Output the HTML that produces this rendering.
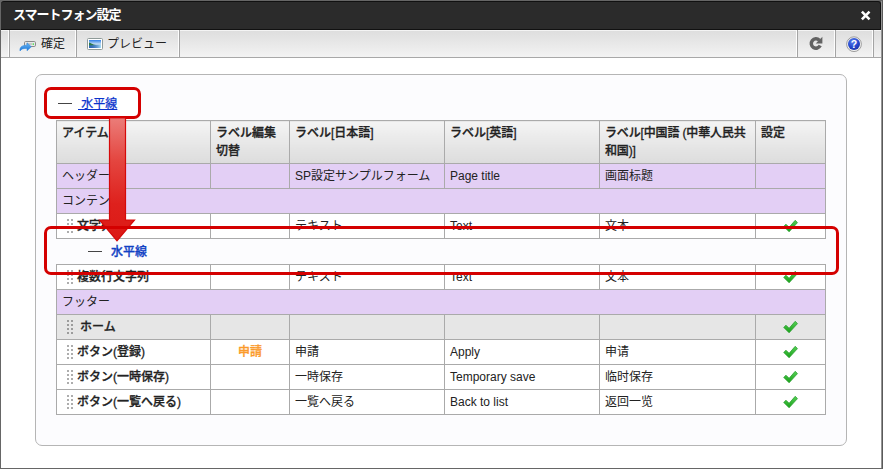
<!DOCTYPE html>
<html lang="ja">
<head>
<meta charset="utf-8">
<title>スマートフォン設定</title>
<style>
*{box-sizing:border-box;margin:0;padding:0}
html,body{width:883px;height:469px;overflow:hidden;background:#fff}
body{position:relative;font-family:"Liberation Sans","Noto Sans CJK JP",sans-serif;font-size:12px;color:#222}
#frame{position:absolute;left:0;top:0;width:883px;height:469px;border:1px solid #666;border-right:1px solid #5a5a5a;background:linear-gradient(#666 0,#666 6px,#fff 6px);box-shadow:inset -1px 0 0 #959595}
#title{position:absolute;left:1px;top:1px;width:880px;height:29px;background:#2b2b2b;border-top:1px solid #111;border-bottom:1px solid #111;border-right:1px solid #111;border-radius:3px 3px 0 0;color:#fff;font-weight:bold;font-size:13px;letter-spacing:-1px;line-height:26px;padding-left:12px}
#close{position:absolute;left:860px;top:10px;width:11px;height:11px}
#tb{position:absolute;left:1px;top:30px;width:880px;height:28px;background:linear-gradient(#f4f4f4 0,#f4f4f4 1px,#dedede 1px,#f3f3f3 27px);border-bottom:1px solid #a8a8a8}
.sep{position:absolute;top:0;width:2px;height:27px;border-right:1px solid #a4a4a4;background:#fdfdfd}
.tbtxt{position:absolute;top:1px;line-height:27px;font-size:12px;color:#222}
.ico{position:absolute}
#fs{position:absolute;left:35px;top:74px;width:812px;height:372px;border:1px solid #b5b5b5;border-radius:7px;background:#fcfcfe}
table{position:absolute;left:56px;top:120px;border-collapse:collapse;table-layout:fixed;width:769px;font-size:12px}
td,th{border:1px solid #aaa;height:25px;padding:0 5px;line-height:16px;text-align:left;vertical-align:middle;white-space:nowrap;overflow:hidden;background:#fff}
th{height:43px;vertical-align:top;font-weight:500;-webkit-text-stroke:0.3px #222;padding-top:4px;line-height:17.6px;background:linear-gradient(#f4f4f4,#dcdcdc);white-space:normal}
tr.p td{background:#e3cff5}
tr.g td{background:#e6e6e6}
td.b{font-weight:500;-webkit-text-stroke:0.3px #222;padding-left:20px;position:relative}
td.c{text-align:center;padding:0}
.org{color:#fb9a2a;font-weight:500;-webkit-text-stroke:0.3px #fb9a2a}
.grip{position:absolute;left:10px;top:5px;width:2px;height:2px;background:rgba(0,0,0,.32);box-shadow:4px 0 rgba(0,0,0,.32),0 4px rgba(0,0,0,.32),4px 4px rgba(0,0,0,.32),0 8px rgba(0,0,0,.32),4px 8px rgba(0,0,0,.32),0 12px rgba(0,0,0,.32),4px 12px rgba(0,0,0,.32)}
.ck{display:block;margin:0 auto;width:16px;height:14px}
#rb1{position:absolute;left:44px;top:87px;width:97px;height:32px;border:3px solid #d40000;border-radius:7px;background:#fff}
#rb2{position:absolute;left:44px;top:226px;width:795px;height:49px;border:3px solid #d40000;border-radius:7px}
a{color:#0b33cc;-webkit-text-stroke:0.25px #0b33cc}
.dash{position:absolute;width:14px;height:1px;background:#444}
#lnk1{position:absolute;left:78px;top:96px;font-size:12px;line-height:16px}
#lnk2{position:absolute;left:111px;top:243.5px;font-size:12px;line-height:16px;font-weight:500;-webkit-text-stroke:0.3px #1141c4;color:#1141c4}
#arrow{position:absolute;left:95px;top:116px;width:44px;height:128px}
</style>
</head>
<body>
<svg width="0" height="0" style="position:absolute">
<defs>
<linearGradient id="cg" x1="0" y1="0" x2="0" y2="1"><stop offset="0" stop-color="#55d055"/><stop offset="1" stop-color="#18a018"/></linearGradient>
<symbol id="ck" viewBox="0 0 16 14"><path d="M0.7 7.4 L3 5.2 L6.1 8.3 L12.2 1.3 L14.5 3.6 L6.1 12.8 Z" fill="url(#cg)" stroke="#1f9a25" stroke-width="0.7" stroke-linejoin="round"/></symbol>
</defs>
</svg>
<div id="frame"></div>
<div id="title">スマートフォン設定</div>
<svg id="close" viewBox="0 0 11 11"><path d="M1.9 1.7 L9.5 9.3 M9.5 1.7 L1.9 9.3" stroke="#fff" stroke-width="2.6" stroke-linecap="butt"/></svg>
<div id="tb">
  <div class="sep" style="left:7px"></div>
  <div class="sep" style="left:74px"></div>
  <div class="sep" style="left:177px"></div>
  <div class="sep" style="left:795px"></div>
  <div class="sep" style="left:833px"></div>
  <div class="sep" style="left:871px"></div>
  <svg class="ico" style="left:17px;top:8px" width="20" height="16" viewBox="0 0 20 16">
    <defs><linearGradient id="ba" x1="0" y1="0" x2="0" y2="1"><stop offset="0" stop-color="#6ab8f4"/><stop offset="1" stop-color="#1c74d6"/></linearGradient></defs>
    <rect x="6.5" y="3.5" width="11" height="5" rx="1.2" fill="#e8e8e8" stroke="#8a8a8a"/>
    <rect x="8" y="5.5" width="6" height="1" fill="#aaa"/>
    <rect x="14.6" y="5.4" width="1.4" height="1.4" fill="#3ddc3d"/>
    <path d="M2 13 C1.4 9.2 4 7 9 7.2 L9 4.8 L13.4 8.8 L9 12.8 L9 10.5 C5.6 10.2 3.6 10.8 2 13 Z" fill="url(#ba)" stroke="#2a86e0" stroke-width="0.5"/>
  </svg>
  <span class="tbtxt" style="left:40px">確定</span>
  <svg class="ico" style="left:86px;top:8px" width="16" height="12" viewBox="0 0 16 12">
    <defs>
      <linearGradient id="sky" x1="0" y1="0" x2="0" y2="1"><stop offset="0" stop-color="#2f7fe8"/><stop offset="0.55" stop-color="#cfe6f6"/><stop offset="0.62" stop-color="#3a76b8"/><stop offset="1" stop-color="#2c62b4"/></linearGradient>
      <linearGradient id="wat" x1="0" y1="0" x2="1" y2="0"><stop offset="0" stop-color="#2c62b4" stop-opacity="0"/><stop offset="1" stop-color="#a8e0f8"/></linearGradient>
    </defs>
    <rect x="0.5" y="0.5" width="15" height="11" rx="1" fill="#fff" stroke="#8e9a98"/>
    <rect x="2" y="2" width="12" height="8" fill="url(#sky)"/>
    <rect x="2" y="6.8" width="12" height="3.2" fill="url(#wat)"/>
    <path d="M2 4.6 C4 4.8 5 6.6 9 7 L2 7.6 Z" fill="#2f7a4a"/>
  </svg>
  <span class="tbtxt" style="left:106px">プレビュー</span>
  <svg class="ico" style="left:806px;top:6px" width="17" height="16" viewBox="0 0 17 16">
    <path d="M12.3 4.2 A4.7 4.7 0 1 0 13.2 9.6" fill="none" stroke="#636363" stroke-width="3.5"/>
    <path d="M8.8 7.4 L15.4 7.4 L15.4 0.8 Z" fill="#636363"/>
  </svg>
  <svg class="ico" style="left:845px;top:6px" width="16" height="16" viewBox="0 0 16 16">
    <defs><radialGradient id="hb" cx="0.4" cy="0.3" r="0.8"><stop offset="0" stop-color="#5a80ec"/><stop offset="0.6" stop-color="#2346cc"/><stop offset="1" stop-color="#1a2f9a"/></radialGradient></defs>
    <circle cx="8" cy="8.2" r="7.4" fill="#f0f0f0" stroke="#8c8c8c" stroke-width="0.8"/>
    <circle cx="8" cy="8" r="6" fill="url(#hb)"/>
    <text x="8" y="12" text-anchor="middle" font-family="Liberation Sans, sans-serif" font-weight="bold" font-size="10.5" fill="#fff">?</text>
  </svg>
</div>
<div id="fs"></div>
<table>
<colgroup><col style="width:154px"><col style="width:79px"><col style="width:155px"><col style="width:155px"><col style="width:156px"><col style="width:70px"></colgroup>
<tr><th>アイテム</th><th>ラベル編集<br>切替</th><th>ラベル[日本語]</th><th>ラベル[英語]</th><th style="letter-spacing:-0.15px">ラベル[中国語 (中華人民共和国)]</th><th>設定</th></tr>
<tr class="p"><td>ヘッダー</td><td></td><td>SP設定サンプルフォーム</td><td>Page title</td><td>画面标题</td><td></td></tr>
<tr class="p"><td colspan="6">コンテンツ</td></tr>
<tr><td class="b"><i class="grip"></i>文字列</td><td></td><td>テキスト</td><td>Text</td><td>文本</td><td class="c"><svg class="ck"><use href="#ck"/></svg></td></tr>
<tr><td colspan="6" style="height:26px;border-left-color:transparent;border-right-color:transparent;background:#fcfcfe"></td></tr>
<tr><td class="b"><i class="grip"></i>複数行文字列</td><td></td><td>テキスト</td><td>Text</td><td>文本</td><td class="c"><svg class="ck"><use href="#ck"/></svg></td></tr>
<tr class="p"><td colspan="6">フッター</td></tr>
<tr class="g"><td class="b" style="padding-left:23px"><i class="grip"></i>ホーム</td><td></td><td></td><td></td><td></td><td class="c"><svg class="ck"><use href="#ck"/></svg></td></tr>
<tr><td class="b"><i class="grip"></i>ボタン(登録)</td><td class="c org">申請</td><td>申請</td><td>Apply</td><td>申请</td><td class="c"><svg class="ck"><use href="#ck"/></svg></td></tr>
<tr><td class="b"><i class="grip"></i>ボタン(一時保存)</td><td></td><td>一時保存</td><td>Temporary save</td><td>临时保存</td><td class="c"><svg class="ck"><use href="#ck"/></svg></td></tr>
<tr><td class="b"><i class="grip"></i>ボタン(一覧へ戻る)</td><td></td><td>一覧へ戻る</td><td>Back to list</td><td>返回一览</td><td class="c"><svg class="ck"><use href="#ck"/></svg></td></tr>
</table>
<div id="rb1"></div>
<div class="dash" style="left:58px;top:103px"></div>
<div id="lnk1"><a href="#">&nbsp;水平線</a></div>
<div class="dash" style="left:88px;top:251px"></div>
<div id="lnk2">水平線</div>
<svg id="arrow" viewBox="0 0 44 128">
<defs><linearGradient id="ag" x1="0" y1="0" x2="0" y2="1"><stop offset="0" stop-color="#eb7d79"/><stop offset="0.35" stop-color="#e4453f"/><stop offset="0.7" stop-color="#de211d"/><stop offset="1" stop-color="#dc1915"/></linearGradient></defs>
<path d="M14.5 2 H30.5 V104 H39.5 L22 124.7 L4.5 104 H14.5 Z" fill="url(#ag)" stroke="#d60a0a" stroke-width="1.2"/>
</svg>
<div id="rb2"></div>
</body>
</html>
